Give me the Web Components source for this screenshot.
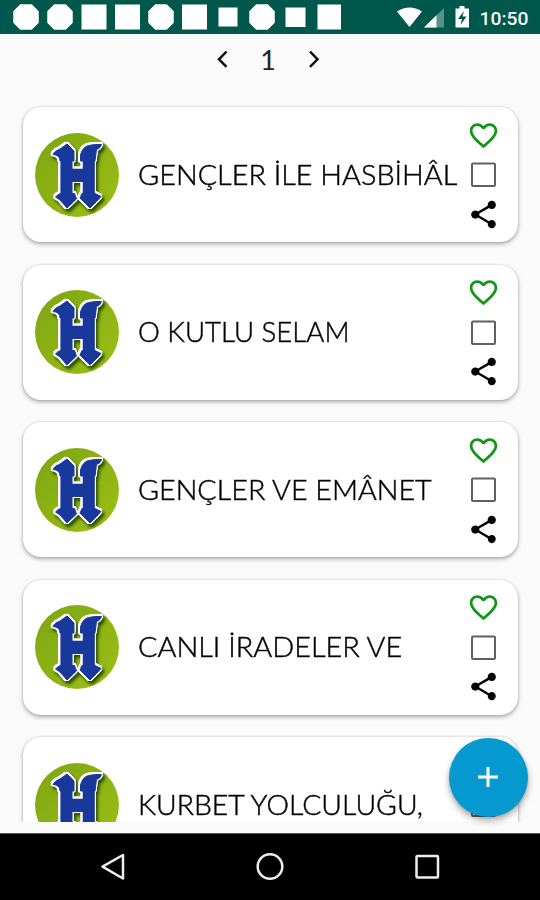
<!DOCTYPE html>
<html lang="tr">
<head>
<meta charset="utf-8">
<title>Hasbihal</title>
<style>
html,body{ margin:0; height:100%; overflow:hidden; background:#fafafa; }
</style>
</head>
<body>
<app-screen></app-screen>
<script>
class StatusBar extends HTMLElement {
    constructor() {
        super();
        const shadowRoot = this.attachShadow({ mode: 'open' });
        shadowRoot.innerHTML = `
        <style>
        :host{ display:block; height:34px; background:#00574b; color:#fff; }
        svg{ display:block; }
        text{ font:500 19px Roboto,sans-serif; fill:#f4f8f7; }
        </style>
        <svg width="540" height="34" viewBox="0 0 540 34" fill="#fff">
            <defs><path id="oct" d="M7.500 1h11l6.500 6.500v11L18.500 25h-11L1 18.500v-11z" stroke="#fff" stroke-width="1.500" stroke-linejoin="round"/></defs>
            <use href="#oct" x="13" y="4"/>
            <use href="#oct" x="47" y="4"/>
            <path d="M81.500 4.500h25v25h-25zM115 4.500h25v25h-25z"/>
            <use href="#oct" x="148" y="4"/>
            <path d="M182 4.500h25v25h-25zM218.500 7.500h19v19h-19z"/>
            <use href="#oct" x="249" y="4"/>
            <path d="M285.500 7.500h20v19.500h-20zM317.500 4.500h23.500v25h-23.500z"/>
            <path d="M397 11.500Q409.500 3.500 422 11.500L409.500 27z"/>
            <path d="M444 8v19.500h-20z" opacity=".35"/>
            <path d="M436.500 15.300v12.200H424z"/>
            <path d="M459.500 8.500V6h5v2.500h4.500v19h-13.500v-19z"/>
            <path d="M464 11l-6 8h4l-1.500 6 6-8.500h-4z" fill="#00574b"/>
            <text x="479.500" y="24.500" textLength="49" lengthAdjust="spacingAndGlyphs">10:50</text>
        </svg>
        `
    }
}
customElements.define('status-bar', StatusBar);

class PageSwitch extends HTMLElement {
    constructor() {
        super();
        const shadowRoot = this.attachShadow({ mode: 'open' });
        shadowRoot.innerHTML = `
        <style>
        :host{ display:flex; height:50px; margin-bottom:1px; align-items:center; justify-content:center; gap:23px; padding-right:4px; font:27px/1 Lato,sans-serif; color:#222; }
        svg{ display:block; width:24px; height:24px; fill:none; stroke:#111; stroke-width:2.5; }
        span{ width:20px; text-align:center; }
        </style>
        <svg viewBox="0 0 24 24"><path d="M15.500 4.500L8 12.300l7.500 7.500"/></svg>
        <span><slot></slot></span>
        <svg viewBox="0 0 24 24"><path d="M9 4.500l7.500 7.800L9 19.800"/></svg>
        `
    }
}
customElements.define('page-switch', PageSwitch);

class RoundLogo extends HTMLElement {
    constructor() {
        super();
        const shadowRoot = this.attachShadow({ mode: 'open' });
        shadowRoot.innerHTML = `
        <style>
        :host{ display:block; width:84px; height:84px; }
        svg{ display:block; overflow:visible; }
        .mark{ fill:#18399b; stroke:#18399b; stroke-width:1; filter:drop-shadow(1.300px 0 0 #fff) drop-shadow(-1.300px 0 0 #fff) drop-shadow(0 1.300px 0 #fff) drop-shadow(0 -1.300px 0 #fff) drop-shadow(2px 3px 1.5px rgba(25,55,0,.8)); }
        text{ font:bold 62px "Liberation Sans",sans-serif; stroke-width:6; }
        </style>
        <svg width="84" height="84" viewBox="0 0 84 84">
            <defs>
                <linearGradient id="green" x2="1" y2="1"><stop offset="0" stop-color="#7da512"/><stop offset="1" stop-color="#9cc015"/></linearGradient>
            </defs>
            <circle cx="42" cy="42" r="42" fill="url(#green)"/>
            <g class="mark">
                <text x="24.600" y="63.500" textLength="36.300" lengthAdjust="spacingAndGlyphs">H</text>
                <path d="M18 21.500q2-4 7-5.500l7-5 7 7v10H25q0-6-7-6.500z"/>
                <path d="M45.500 28v-6q2-8 8-9.500 7-1.500 13-1-1 4-5 5l-1.500 11.500z"/>
                <path d="M20.500 64q2-2.500 5-3.500h14l2 5.500-9.500 9-7-8zM45 65l2-4.500h13l6 3-3 3.500-8 8z"/>
            </g>
        </svg>
        `
    }
}
customElements.define('round-logo', RoundLogo);

class TrackCard extends HTMLElement {
    constructor() {
        super();
        const shadowRoot = this.attachShadow({ mode: 'open' });
        shadowRoot.innerHTML = `
        <style>
        :host{ display:flex; box-sizing:border-box; height:135px; flex:none; align-items:center; padding:0 16.500px 0 11.500px; border-radius:18px; background:#fff; box-shadow:0 2px 4px rgba(0,0,0,.32),0 0 2px rgba(0,0,0,.14); }
        .title{ flex:1; min-width:0; margin:0 0 2px 19px; }
        #text{ display:inline-block; white-space:nowrap; transform-origin:0 50%; font:28px/40px Lato,sans-serif; font-weight:300; color:#000; -webkit-text-stroke:.5px #111; }
        .tools{ display:flex; flex-direction:column; align-items:center; gap:6.500px; width:36px; }
        svg{ display:block; width:33px; height:33px; }
        </style>
        <round-logo></round-logo>
        <div class="title"><span id="text"><slot></slot></span></div>
        <div class="tools">
            <svg viewBox="0 0 24 24" fill="#109618"><path d="M16.500 3c-1.740 0-3.410.81-4.500 2.090C10.910 3.810 9.240 3 7.500 3 4.420 3 2 5.420 2 8.500c0 3.780 3.400 6.860 8.550 11.540L12 21.350l1.450-1.320C18.600 15.360 22 12.280 22 8.500 22 5.420 19.580 3 16.500 3zm-4.400 15.550l-.1.100-.1-.1C7.140 14.240 4 11.390 4 8.500 4 6.500 5.500 5 7.500 5c1.540 0 3.040.99 3.570 2.360h1.870C13.460 5.990 14.960 5 16.500 5c2 0 3.500 1.500 3.500 3.500 0 2.890-3.140 5.740-7.900 10.050z"/></svg>
            <svg viewBox="0 0 33 33" fill="none" stroke="#606060" stroke-width="2"><rect x="5" y="5.500" width="23" height="22.500" rx="1"/></svg>
            <svg viewBox="0 0 24 24"><path d="M18 16.080c-.76 0-1.440.3-1.960.77L8.910 12.700c.05-.23.09-.46.09-.7s-.04-.47-.09-.7l7.050-4.110c.54.5 1.250.81 2.040.81 1.660 0 3-1.340 3-3s-1.340-3-3-3-3 1.340-3 3c0 .24.040.47.09.7L8.040 9.810C7.500 9.310 6.790 9 6 9c-1.660 0-3 1.340-3 3s1.340 3 3 3c.79 0 1.500-.31 2.040-.81l7.120 4.160c-.05.210-.08.430-.08.650 0 1.610 1.310 2.920 2.920 2.920s2.920-1.310 2.920-2.920-1.310-2.920-2.920-2.920z"/></svg>
        </div>
        `
    }

    get fit() {
        return Number(this.getAttribute('fit'));
    }

    connectedCallback() {
        const text = this.shadowRoot.getElementById('text');
        if(this.fit){
            text.style.transform = `scaleX(${this.fit / text.offsetWidth})`;
        }
    }
}
customElements.define('track-card', TrackCard);

class AddButton extends HTMLElement {
    constructor() {
        super();
        const shadowRoot = this.attachShadow({ mode: 'open' });
        shadowRoot.innerHTML = `
        <style>
        :host{ display:flex; width:79px; height:79px; align-items:center; justify-content:center; border-radius:50%; background:#0699cf; box-shadow:0 4px 7px rgba(0,0,0,.32),0 1px 3px rgba(0,0,0,.12); }
        svg{ display:block; }
        </style>
        <svg width="20" height="20" viewBox="0 0 20 20" stroke="#fff" stroke-width="3"><path d="M0 10h20M10 0v20"/></svg>
        `
    }
}
customElements.define('add-button', AddButton);

class NavBar extends HTMLElement {
    constructor() {
        super();
        const shadowRoot = this.attachShadow({ mode: 'open' });
        shadowRoot.innerHTML = `
        <style>
        :host{ display:flex; height:67px; box-sizing:border-box; align-items:center; justify-content:center; gap:125px; background:#000; border-top:1px solid #555; }
        svg{ display:block; width:32px; height:32px; fill:none; stroke:#eee; stroke-width:2.500; stroke-linejoin:round; }
        </style>
        <svg viewBox="0 0 32 32"><path d="M26 4v23.500L5.500 15.700z"/></svg>
        <svg viewBox="0 0 32 32"><circle cx="16" cy="15.500" r="12.300"/></svg>
        <svg viewBox="0 0 32 32"><rect x="5.500" y="5" width="21.500" height="21.500" rx="1"/></svg>
        `
    }
}
customElements.define('nav-bar', NavBar);

class AppScreen extends HTMLElement {
    constructor() {
        super();
        const shadowRoot = this.attachShadow({ mode: 'open' });
        shadowRoot.innerHTML = `
        <style>
        :host{ display:flex; flex-direction:column; position:relative; width:540px; height:900px; overflow:hidden; background:#fafafa; }
        .list{ display:flex; flex-direction:column; flex:1; min-height:0; box-sizing:border-box; gap:22.500px; padding:22px 22px 0 23px; margin-bottom:11px; overflow:hidden; }
        add-button{ position:absolute; right:12.500px; bottom:83.500px; }
        </style>
        <status-bar></status-bar>
        <page-switch>1</page-switch>
        <div class="list">
            <track-card fit="319">GENÇLER İLE HASBİHÂL</track-card>
            <track-card fit="212">O KUTLU SELAM</track-card>
            <track-card fit="294">GENÇLER VE EMÂNET</track-card>
            <track-card fit="264">CANLI İRADELER VE</track-card>
            <track-card fit="285">KURBET YOLCULUĞU,</track-card>
        </div>
        <nav-bar></nav-bar>
        <add-button></add-button>
        `
    }
}
customElements.define('app-screen', AppScreen);
</script>
</body>
</html>
